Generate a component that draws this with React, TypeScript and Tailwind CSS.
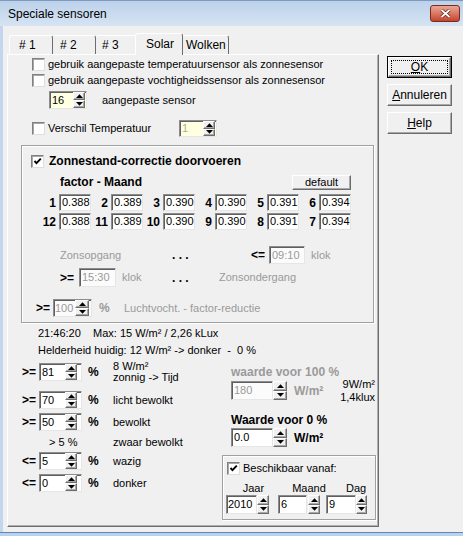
import React from "react";

const NARROW = "font-['Liberation_Sans',Arial,sans-serif] text-[11px]";
const BOLD = "font-['Liberation_Sans',sans-serif] font-bold text-[12px]";
const SUNK =
  "border border-t-[#8c8c8c] border-l-[#8c8c8c] border-r-[#e6e6e6] border-b-[#e6e6e6] shadow-[inset_1px_1px_0_#5f5f5f]";
const RAISED =
  "border border-t-white border-l-white border-r-[#6d6d6d] border-b-[#6d6d6d] shadow-[inset_-1px_-1px_0_#a8a8a8]";
const GRAY = "text-[#9a9a9a]";

function Check({ checked = false }: { checked?: boolean }) {
  return (
    <span className="inline-flex w-[13px] h-[13px] shrink-0 bg-white border border-t-[#808080] border-l-[#808080] border-r-[#dedede] border-b-[#dedede] shadow-[inset_1px_1px_0_#a8a8a8] items-center justify-center">
      {checked && (
        <svg width="9" height="9" viewBox="0 0 9 9">
          <path d="M1.5 4 L3.5 6.2 L7.8 1.6" stroke="#000" strokeWidth="1.9" fill="none" />
        </svg>
      )}
    </span>
  );
}

function Up() {
  return (
    <svg width="7" height="4" viewBox="0 0 7 4">
      <path d="M0 4 L3.5 0.3 L7 4 Z" fill="#000" />
    </svg>
  );
}
function Down() {
  return (
    <svg width="7" height="4" viewBox="0 0 7 4">
      <path d="M0 0 L3.5 3.7 L7 0 Z" fill="#000" />
    </svg>
  );
}

function Spinner({ className = "" }: { className?: string }) {
  return (
    <div className={`flex flex-col h-full shrink-0 ${className}`}>
      <div className={`flex-1 flex items-center justify-center bg-[#f0f0f0] ${RAISED}`}>
        <Up />
      </div>
      <div className={`flex-1 flex items-center justify-center bg-[#f0f0f0] ${RAISED}`}>
        <Down />
      </div>
    </div>
  );
}

function Btn({ children, def = false }: { children: React.ReactNode; def?: boolean }) {
  if (def)
    return (
      <div className="w-[65px] h-[22px] border border-black">
        <div className={`w-full h-full bg-[#f0f0f0] ${RAISED} flex items-center justify-center p-[2px]`}>
          <div className="w-full h-full border border-dotted border-black flex items-center justify-center">
            {children}
          </div>
        </div>
      </div>
    );
  return (
    <div className={`w-[65px] h-[22px] bg-[#f0f0f0] ${RAISED} flex items-center justify-center`}>
      {children}
    </div>
  );
}

function MonthCell({ n, v }: { n: string; v: string }) {
  return (
    <div className="flex items-center w-[52px] h-full">
      <span className={`${BOLD} w-[17px] text-right mr-[3px]`}>{n}</span>
      <div className={`${SUNK} bg-white w-[32px] h-full flex items-center pl-[2px]`}>{v}</div>
    </div>
  );
}

function LevelRow({ op, v, label }: { op: string; v: string; label: React.ReactNode }) {
  return (
    <div className="flex items-center h-[18px] pl-[14px]">
      <span className={`${BOLD} w-[17px]`}>{op}</span>
      <div className={`${SUNK} bg-white w-[43px] h-full flex items-center pr-[4px]`}>
        <span className="flex-1 pl-[2px]">{v}</span>
        <Spinner className="w-[12px]" />
      </div>
      <span className={`${BOLD} ml-[6px] w-[25px]`}>%</span>
      <div>{label}</div>
    </div>
  );
}

export default function App() {
  return (
    <div
      className={`w-[463px] h-[536px] overflow-hidden flex flex-col bg-[#f0f0f0] leading-none whitespace-nowrap text-black ${NARROW}`}
    >
      {/* title bar */}
      <div className="h-[26px] shrink-0 flex items-center justify-between bg-linear-to-b from-[#bcd1ea] to-[#d6e4f3] border-t border-[#7d99bd] pl-[8px] pr-[3px]">
        <span className="font-['Liberation_Sans',sans-serif] text-[12px] text-black">Speciale sensoren</span>
        <div className="w-[30px] h-[17px] rounded-[3px] border border-[#7a2b1f] bg-linear-to-b from-[#eba797] to-[#c5432c] flex items-center justify-center">
          <svg width="11" height="9" viewBox="0 0 11 9">
            <path d="M1.5 1 L9.5 8 M9.5 1 L1.5 8" stroke="#5a1c12" strokeWidth="3.2" />
            <path d="M1.5 1 L9.5 8 M9.5 1 L1.5 8" stroke="#fff" strokeWidth="1.8" />
          </svg>
        </div>
      </div>

      {/* body */}
      <div className="flex-1 flex border-l-[3px] border-[#c3d6ed]">
        <div className="ml-[4px] w-[372px] flex flex-col pt-[7px]">
          {/* tabs */}
          <div className="flex items-end h-[21px] pl-[2px] relative z-10 text-[12px]">
            <div className="w-[44px] h-[19px] pl-[9px] flex items-center border-t border-l border-white border-r border-r-[#6d6d6d] rounded-t-[3px]">
              # 1
            </div>
            <div className="w-[43px] h-[19px] pl-[7px] flex items-center border-t border-white border-r border-r-[#6d6d6d] rounded-t-[3px]">
              # 2
            </div>
            <div className="w-[41px] h-[19px] pl-[6px] flex items-center border-t border-white border-r border-r-[#6d6d6d] rounded-t-[3px]">
              # 3
            </div>
            <div className="relative z-20 -ml-[2px] -mr-[2px] -mb-[1px] w-[48px] h-[22px] pl-[10px] pb-[2px] flex items-center bg-[#f0f0f0] border-t border-l border-white border-r border-r-[#6d6d6d] rounded-t-[3px]">
              Solar
            </div>
            <div className="w-[48px] h-[19px] pl-[5px] flex items-center border-t border-white border-r border-r-[#6d6d6d] rounded-t-[3px]">
              Wolken
            </div>
          </div>

          {/* panel */}
          <div className="h-[473px] flex flex-col border border-t-white border-l-white border-r-[#6d6d6d] border-b-[#6d6d6d] shadow-[inset_-1px_-1px_0_#b0b0b0]">
            <div className="mt-[1px] h-[16px] flex items-center pl-[24px] gap-[3px]">
              <Check />
              <span>gebruik aangepaste temperatuursensor als zonnesensor</span>
            </div>
            <div className="h-[16px] flex items-center pl-[24px] gap-[3px]">
              <Check />
              <span>gebruik aangepaste vochtigheidssensor als zonnesensor</span>
            </div>
            <div className="mt-[3px] h-[18px] flex items-center pl-[41px]">
              <div className={`${SUNK} bg-[#ffffe1] w-[38px] h-full flex items-center pr-[1px]`}>
                <span className="flex-1 pl-[2px]">16</span>
                <Spinner className="w-[12px]" />
              </div>
              <span className="ml-[15px]">aangepaste sensor</span>
            </div>
            <div className="mt-[10px] h-[19px] flex items-center pl-[24px]">
              <div className="w-[147px] flex items-center gap-[3px]">
                <Check />
                <span>Verschil Temperatuur</span>
              </div>
              <div className={`${SUNK} bg-[#ffffe1] w-[38px] h-[17px] flex items-center pr-[1px]`}>
                <span className="flex-1 pl-[2px] text-[#aeae8e]">1</span>
                <Spinner className="w-[12px]" />
              </div>
            </div>

            {/* group */}
            <div className="mt-[7px] ml-[13px] w-[353px] h-[178px] shrink-0 border border-[#a0a0a0] shadow-[inset_1px_1px_0_#ffffff,1px_1px_0_#ffffff] flex flex-col">
              <div className="mt-[8px] h-[14px] flex items-center pl-[9px] gap-[5px]">
                <Check checked />
                <span className={`${BOLD}`}>Zonnestand-correctie doorvoeren</span>
              </div>
              <div className="mt-[6px] h-[16px] flex items-center pl-[38px]">
                <span className={`${BOLD} w-[232px]`}>factor - Maand</span>
                <div className={`w-[59px] h-[15px] bg-[#f0f0f0] ${RAISED} flex items-center justify-center`}>
                  default
                </div>
              </div>
              <div className="mt-[4px] h-[17px] flex pl-[17px]">
                <MonthCell n="1" v="0.388" />
                <MonthCell n="2" v="0.389" />
                <MonthCell n="3" v="0.390" />
                <MonthCell n="4" v="0.390" />
                <MonthCell n="5" v="0.391" />
                <MonthCell n="6" v="0.394" />
              </div>
              <div className="mt-[2px] h-[17px] flex pl-[17px]">
                <MonthCell n="12" v="0.388" />
                <MonthCell n="11" v="0.389" />
                <MonthCell n="10" v="0.390" />
                <MonthCell n="9" v="0.390" />
                <MonthCell n="8" v="0.391" />
                <MonthCell n="7" v="0.394" />
              </div>
              <div className="mt-[16px] h-[18px] flex items-center pl-[38px]">
                <span className={`${GRAY} w-[112px]`}>Zonsopgang</span>
                <span className={`${BOLD} w-[79px]`}>. . .</span>
                <span className={`${BOLD} w-[18px]`}>&lt;=</span>
                <div className={`${SUNK} bg-[#fbfbfb] w-[36px] h-full flex items-center pl-[2px] ${GRAY}`}>09:10</div>
                <span className={`${GRAY} ml-[6px]`}>klok</span>
              </div>
              <div className="mt-[4px] h-[19px] flex items-center pl-[38px]">
                <span className={`${BOLD} w-[19px]`}>&gt;=</span>
                <div className={`${SUNK} bg-[#fbfbfb] w-[37px] h-full flex items-center pl-[2px] ${GRAY}`}>15:30</div>
                <span className={`${GRAY} ml-[6px] w-[50px]`}>klok</span>
                <span className={`${BOLD} w-[47px]`}>. . .</span>
                <span className={GRAY}>Zonsondergang</span>
              </div>
              <div className="mt-[12px] h-[18px] flex items-center pl-[14px]">
                <span className={`${BOLD} w-[17px]`}>&gt;=</span>
                <div className={`${SUNK} bg-[#fbfbfb] w-[39px] h-full flex items-center pr-[2px]`}>
                  <span className={`flex-1 pl-[1px] ${GRAY}`}>100</span>
                  <Spinner className="w-[14px]" />
                </div>
                <span className={`${BOLD} ${GRAY} ml-[7px] w-[25px]`}>%</span>
                <span className={GRAY}>Luchtvocht. - factor-reductie</span>
              </div>
            </div>

            {/* status text */}
            <div className="mt-[3px] h-[14px] flex items-center pl-[30px]">
              <span className="w-[55px]">21:46:20</span>
              <span>Max: 15 W/m² / 2,26 kLux</span>
            </div>
            <div className="mt-[3px] h-[14px] flex items-center pl-[30px]">
              <span>Helderheid huidig: 12 W/m² -&gt; donker&nbsp; -&nbsp; 0 %</span>
            </div>

            {/* lower */}
            <div className="flex">
              <div className="w-[214px] flex flex-col">
                <div className="mt-[6px]">
                  <LevelRow
                    op=">="
                    v="81"
                    label={
                      <div className="flex flex-col leading-[11px]">
                        <span>8 W/m²</span>
                        <span>zonnig -&gt; Tijd</span>
                      </div>
                    }
                  />
                </div>
                <div className="mt-[10px]">
                  <LevelRow op=">=" v="70" label="licht bewolkt" />
                </div>
                <div className="mt-[4px]">
                  <LevelRow op=">=" v="50" label="bewolkt" />
                </div>
                <div className="mt-[4px] h-[14px] flex items-center pl-[41px]">
                  <span className="w-[64px]">&gt; 5 %</span>
                  <span>zwaar bewolkt</span>
                </div>
                <div className="mt-[3px]">
                  <LevelRow op="<=" v="5" label="wazig" />
                </div>
                <div className="mt-[4px]">
                  <LevelRow op="<=" v="0" label="donker" />
                </div>
              </div>

              <div className="w-[154px] flex flex-col">
                <div className={`mt-[8px] h-[14px] flex items-center pl-[9px] ${BOLD} ${GRAY}`}>waarde voor 100 %</div>
                <div className="mt-[2px] h-[19px] flex items-center pl-[9px]">
                  <div className={`${SUNK} bg-[#fbfbfb] w-[42px] h-full flex items-center pl-[2px] ${GRAY}`}>180</div>
                  <Spinner className="w-[14px]" />
                  <span className={`${BOLD} ${GRAY} ml-[7px]`}>W/m²</span>
                  <div className="flex-1 flex flex-col items-end pr-[1px] leading-[13px]">
                    <span>9W/m²</span>
                    <span>1,4klux</span>
                  </div>
                </div>
                <div className={`mt-[13px] h-[14px] flex items-center pl-[9px] ${BOLD}`}>Waarde voor 0 %</div>
                <div className="mt-[1px] h-[19px] flex items-center pl-[9px]">
                  <div className={`${SUNK} bg-white w-[42px] h-full flex items-center pl-[2px]`}>0.0</div>
                  <Spinner className="w-[14px]" />
                  <span className={`${BOLD} ml-[7px]`}>W/m²</span>
                </div>
                <div className="mt-[8px] w-[154px] h-[65px] border border-[#a0a0a0] shadow-[inset_1px_1px_0_#ffffff,1px_1px_0_#ffffff] flex flex-col">
                  <div className="mt-[6px] h-[13px] flex items-center pl-[4px] gap-[3px]">
                    <Check checked />
                    <span>Beschikbaar vanaf:</span>
                  </div>
                  <div className="mt-[6px] h-[14px] flex items-center pl-[3px]">
                    <span className="w-[58px] text-center">Jaar</span>
                    <span className="w-[60px] text-center">Maand</span>
                    <span className="w-[40px] text-center">Dag</span>
                  </div>
                  <div className="h-[19px] flex items-center pl-[3px]">
                    <div className={`${SUNK} bg-white w-[31px] h-full flex items-center pl-[1px]`}>2010</div>
                    <Spinner className="w-[12px]" />
                    <div className={`${SUNK} bg-white w-[29px] h-full flex items-center pl-[2px] ml-[9px]`}>6</div>
                    <Spinner className="w-[12px] ml-[1px]" />
                    <div className={`${SUNK} bg-white w-[30px] h-full flex items-center pl-[2px] ml-[6px]`}>9</div>
                    <Spinner className="w-[11px]" />
                  </div>
                </div>
              </div>
            </div>
          </div>
        </div>

        {/* buttons */}
        <div className="ml-[8px] pt-[30px] flex flex-col gap-[6px] text-[12px]">
          <Btn def>
            <span>
              <span className="underline">O</span>K
            </span>
          </Btn>
          <Btn>
            <span>
              <span className="underline">A</span>nnuleren
            </span>
          </Btn>
          <Btn>
            <span>
              <span className="underline">H</span>elp
            </span>
          </Btn>
        </div>
      </div>

      <div className="h-[4px] shrink-0 border-t border-[#5e8ab5] bg-[#b9d2ec]" />
    </div>
  );
}
